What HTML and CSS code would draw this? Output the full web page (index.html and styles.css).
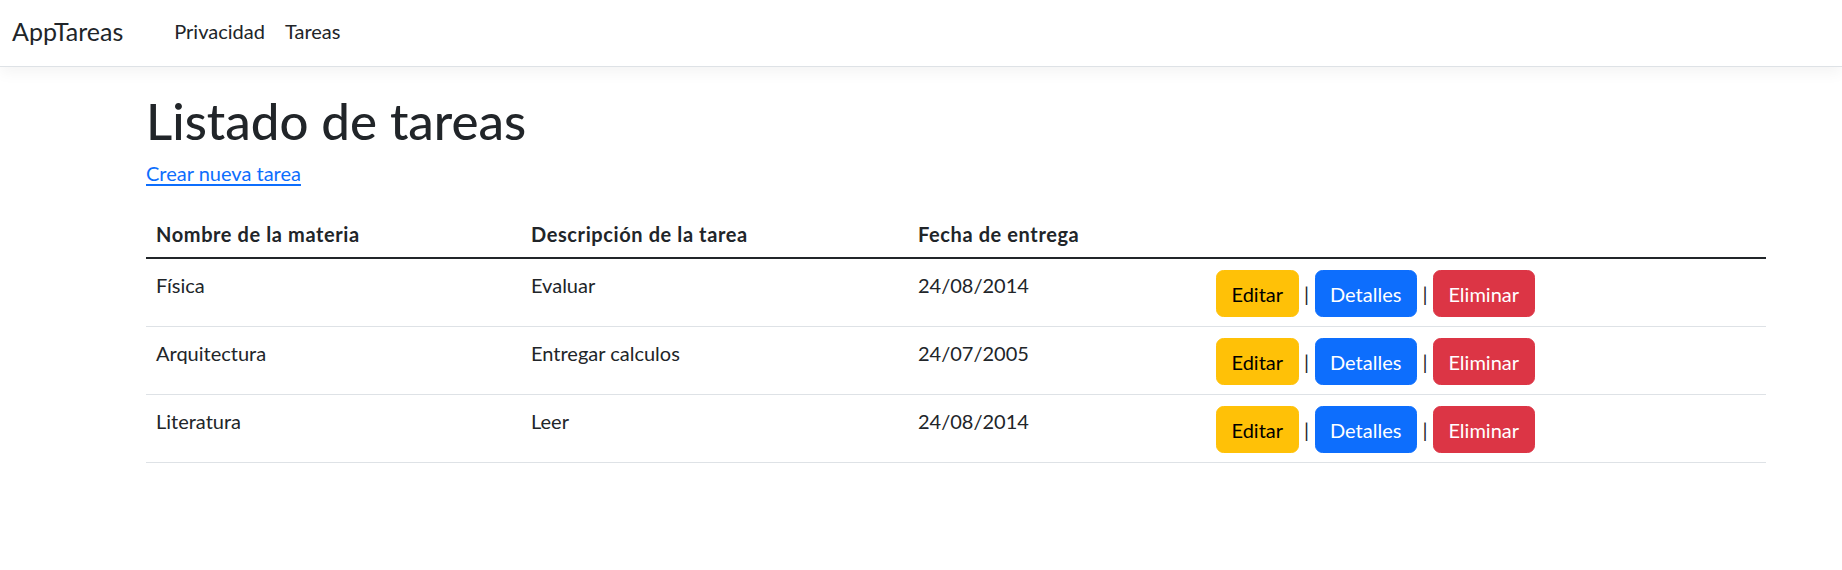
FILE: index.html
```html
<!DOCTYPE html>
<html lang="es">
<head>
<meta charset="utf-8">
<title>Listado de tareas - AppTareas</title>
<link rel="stylesheet" href="styles.css">
</head>
<body>
<header class="navbar">
  <a class="brand" href="#">AppTareas</a>
  <nav class="nav">
    <a class="nav-link" href="#">Privacidad</a>
    <a class="nav-link" href="#">Tareas</a>
  </nav>
</header>
<main class="container">
  <h1 class="title">Listado de tareas</h1>
  <p class="create"><a href="#">Crear nueva tarea</a></p>
  <table class="table">
    <thead>
      <tr>
        <th class="c1">Nombre de la materia</th>
        <th class="c2">Descripción de la tarea</th>
        <th class="c3">Fecha de entrega</th>
        <th class="c4"></th>
      </tr>
    </thead>
    <tbody>
      <tr>
        <td>Física</td>
        <td>Evaluar</td>
        <td>24/08/2014</td>
        <td><div class="actions"><a class="btn btn-warning" href="#">Editar</a><span class="sep">|</span><a class="btn btn-primary" href="#">Detalles</a><span class="sep">|</span><a class="btn btn-danger" href="#">Eliminar</a></div></td>
      </tr>
      <tr>
        <td>Arquitectura</td>
        <td>Entregar calculos</td>
        <td>24/07/2005</td>
        <td><div class="actions"><a class="btn btn-warning" href="#">Editar</a><span class="sep">|</span><a class="btn btn-primary" href="#">Detalles</a><span class="sep">|</span><a class="btn btn-danger" href="#">Eliminar</a></div></td>
      </tr>
      <tr>
        <td>Literatura</td>
        <td>Leer</td>
        <td>24/08/2014</td>
        <td><div class="actions"><a class="btn btn-warning" href="#">Editar</a><span class="sep">|</span><a class="btn btn-primary" href="#">Detalles</a><span class="sep">|</span><a class="btn btn-danger" href="#">Eliminar</a></div></td>
      </tr>
    </tbody>
  </table>
</main>
</body>
</html>
```
FILE: styles.css
```css
* { box-sizing: border-box; }
html, body { margin: 0; padding: 0; background: #fff; }
body {
  font-family: Lato, "Liberation Sans", sans-serif;
  font-size: 20px;
  line-height: 30px;
  color: #212529;
}
a { color: #0d6efd; }

.navbar {
  display: flex;
  align-items: flex-start;
  height: 67px;
  padding: 16px 12px 0;
  border-bottom: 1px solid #dee2e6;
  box-shadow: 0 5px 15px rgba(0, 0, 0, 0.05);
  background: #fff;
}
.brand {
  font-size: 25px;
  line-height: 30px;
  color: #212529;
  text-decoration: none;
}
.nav {
  display: flex;
  margin-left: 41px;
}
.nav-link {
  padding: 0 10px;
  font-size: 20px;
  line-height: 30px;
  color: #212529;
  text-decoration: none;
}

.container {
  padding: 26px 0 0 146px;
  width: 1766px;
}
.title {
  margin: 0 0 9px;
  font-size: 51px;
  line-height: 56px;
  font-weight: 500;
}
.create {
  margin: 0 0 21px;
}
.create a { text-underline-offset: 3px; }

.table {
  width: 1620px;
  table-layout: fixed;
  border-collapse: collapse;
}
.c1 { width: 375px; }
.c2 { width: 387px; }
.c3 { width: 298px; }
.c4 { width: 560px; }
.table th {
  text-align: left;
  font-weight: 700;
  letter-spacing: 0.6px;
  padding: 10px 10px 8px;
  border-bottom: 2px solid #212529;
  vertical-align: top;
}
.table td {
  padding: 11px 10px 9px;
  vertical-align: top;
  border-bottom: 1px solid #dee2e6;
}
.actions {
  display: flex;
  align-items: center;
  gap: 5.5px;
}
.sep {
  color: #212529;
  line-height: 30px;
}
.btn {
  display: inline-block;
  padding: 7.5px 14.5px;
  font-size: 20px;
  line-height: 30px;
  border: 1px solid transparent;
  border-radius: 7.5px;
  text-decoration: none;
  text-align: center;
}
.btn-warning { background: #ffc107; border-color: #ffc107; color: #000; }
.btn-primary { background: #0d6efd; border-color: #0d6efd; color: #fff; }
.btn-danger { background: #dc3545; border-color: #dc3545; color: #fff; }
```
